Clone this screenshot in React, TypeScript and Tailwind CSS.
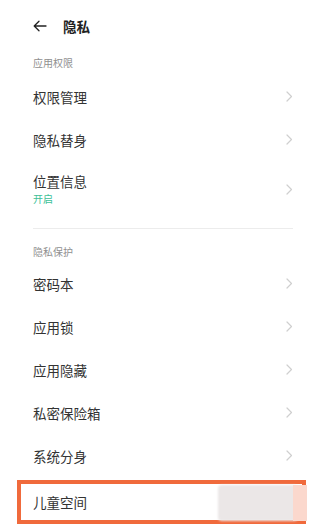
const font = { fontFamily: '"Noto Sans CJK SC", "Noto Sans", sans-serif' };

function Chevron() {
  return (
    <svg width="7" height="11" viewBox="0 0 7 11" fill="none" className="shrink-0">
      <path d="M1 1l4.5 4.5L1 10" stroke="#cfcfcf" strokeWidth="1.2" strokeLinecap="round" strokeLinejoin="round" />
    </svg>
  );
}

function Row({ label, sub }: { label: string; sub?: string }) {
  return (
    <div className={`flex items-center justify-between ${sub ? "h-[56px]" : "h-[43px]"}`}>
      <div className="flex flex-col">
        <span className="text-[13.5px] leading-[18px] text-[#333]">{label}</span>
        {sub && <span className="mt-[2px] text-[10px] leading-[14px] text-[#3cbf97]">{sub}</span>}
      </div>
      <Chevron />
    </div>
  );
}

function SectionTitle({ children, className = "" }: { children: string; className?: string }) {
  return <div className={`text-[10px] leading-[14px] text-[#8f8f8f] ${className}`}>{children}</div>;
}

export default function App() {
  return (
    <div className="w-[335px] h-[527px] overflow-hidden bg-white pl-[33px] pr-[42px]" style={font}>
      <header className="flex h-[52px] items-center gap-[16px]">
        <svg width="14" height="12" viewBox="0 0 14 12" fill="none">
          <path d="M13 6H1.5M6 1.2L1.2 6 6 10.8" stroke="#222" strokeWidth="1.3" strokeLinecap="round" strokeLinejoin="round" />
        </svg>
        <span className="text-[13.5px] font-bold text-[#222]">隐私</span>
      </header>

      <SectionTitle className="pt-[4px] pb-[5px]">应用权限</SectionTitle>
      <Row label="权限管理" />
      <Row label="隐私替身" />
      <Row label="位置信息" sub="开启" />
      <div className="mt-[11px] h-px bg-[#ececec]" />

      <SectionTitle className="pt-[16px] pb-[3px]">隐私保护</SectionTitle>
      <Row label="密码本" />
      <Row label="应用锁" />
      <Row label="应用隐藏" />
      <Row label="私密保险箱" />
      <Row label="系统分身" />

      <div className="relative -ml-[16px] -mr-[13px] mt-[3px] flex h-[44px] items-center border-[4px] border-[#f06a3c] pl-[12px]">
        <span className="text-[13.5px] text-[#333]">儿童空间</span>
        <div className="absolute left-[197px] top-[1px] h-[36px] w-[80px] rounded-[4px] bg-[#ebe7e7] blur-[1px]" />
        <div className="absolute left-[272px] top-[1px] h-[36px] w-[14px] bg-[#fbd8cd]" />
      </div>
    </div>
  );
}
